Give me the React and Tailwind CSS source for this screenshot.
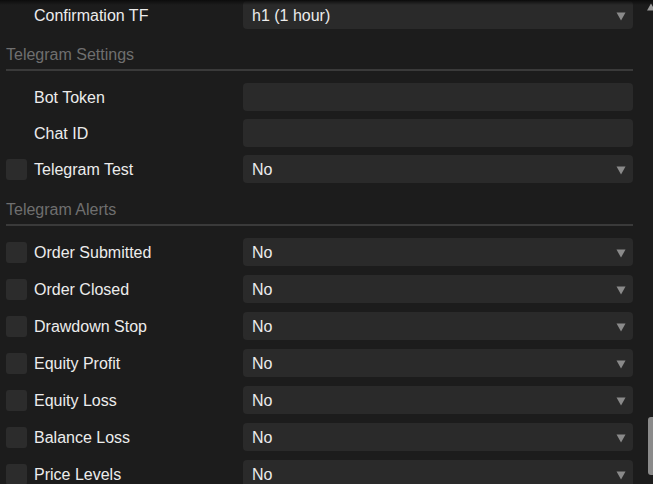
const settings = [
  { label: "Bot Token", kind: "input" },
  { label: "Chat ID", kind: "input" },
  { label: "Telegram Test", kind: "select", check: true },
];

const alerts = [
  "Order Submitted",
  "Order Closed",
  "Drawdown Stop",
  "Equity Profit",
  "Equity Loss",
  "Balance Loss",
  "Price Levels",
];

const Select = ({ value }) => (
  <div className="flex h-[28px] w-[390px] shrink-0 items-center justify-between rounded-[4px] bg-[#2a2a2a] pl-[9px] pr-[7px] text-[16px] text-[#ececec]">
    <span className="pt-[2px]">{value}</span>
    <svg width="10" height="9" viewBox="0 0 10 9" className="mt-[2px]">
      <path d="M0.5 0.5h9L5 8.5z" fill="#8a8a8a" />
    </svg>
  </div>
);

const Row = ({ label, check, kind = "select", value = "No" }) => (
  <div className="flex h-[28px] items-center">
    <div className="flex w-[28px] shrink-0 items-center">
      {check && <div className="h-[21px] w-[21px] rounded-[3px] bg-[#2c2c2c]" />}
    </div>
    <div className="w-[209px] shrink-0 pt-[2px] text-[16px] text-[#ececec]">{label}</div>
    {kind === "input" ? (
      <div className="h-[28px] w-[390px] shrink-0 rounded-[4px] bg-[#2a2a2a]" />
    ) : (
      <Select value={value} />
    )}
  </div>
);

const Header = ({ title, top }) => (
  <div className={top}>
    <div className="h-[18px] pt-[1px] text-[16px] leading-[18px] text-[#6f6f6f]">{title}</div>
    <div className="mt-[6px] h-[2px] w-[627px] bg-[#3a3a3a]" />
  </div>
);

export default function App() {
  return (
    <div
      className="relative flex h-[484px] w-[653px] overflow-hidden bg-[#1c1c1c]"
      style={{ fontFamily: '"Liberation Sans", Arial, sans-serif' }}
    >
      <div className="pointer-events-none absolute left-0 top-0 h-[5px] w-full bg-gradient-to-b from-[#0c0c0c] to-transparent" />

      <div className="flex-1 pl-[6px] pt-[1px]">
        <Row label="Confirmation TF" value="h1 (1 hour)" />

        <Header title="Telegram Settings" top="mt-[16px]" />
        <div className="mt-[12px] flex flex-col gap-[8px]">
          {settings.map((s) => (
            <Row key={s.label} label={s.label} kind={s.kind} check={s.check} />
          ))}
        </div>

        <Header title="Telegram Alerts" top="mt-[17px]" />
        <div className="mt-[12px] flex flex-col gap-[9px]">
          {alerts.map((a) => (
            <Row key={a} label={a} check />
          ))}
        </div>
      </div>

      <div className="relative w-[8px] shrink-0">
        <svg width="8" height="8" viewBox="0 0 8 8" className="absolute left-[2px] top-[3px]">
          <path d="M4 0.5L8 7.5H0z" fill="#9a9a9a" />
        </svg>
        <div className="absolute left-[3px] top-[417px] h-[58px] w-[8px] rounded-[3px] bg-[#8a8a8a]" />
      </div>
    </div>
  );
}
